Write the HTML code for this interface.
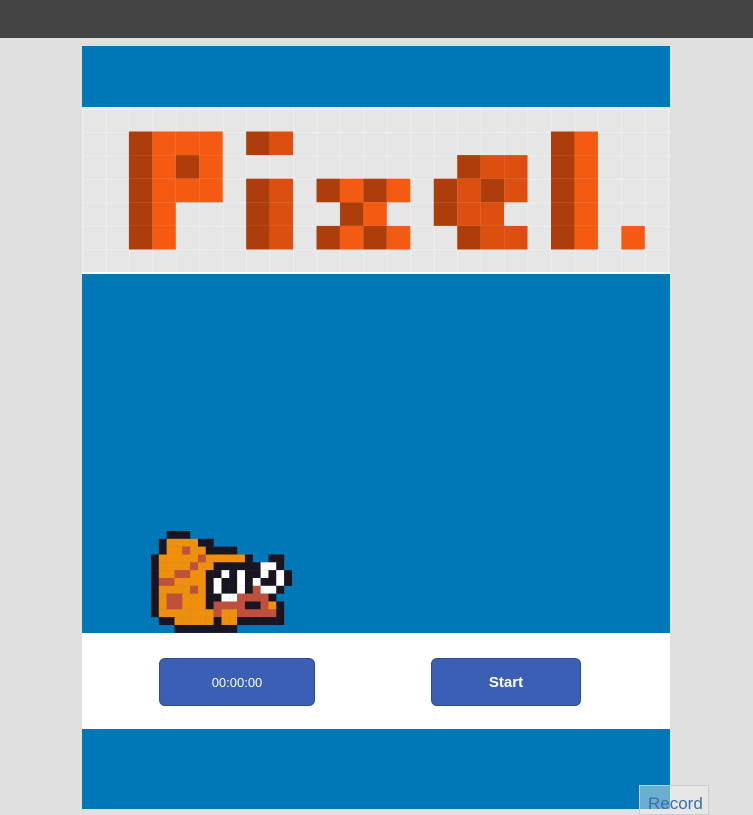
<!DOCTYPE html>
<html><head><style>
body{margin:0;width:753px;height:809px;background:#e0e0e0;position:relative;overflow:hidden;font-family:"Liberation Sans",sans-serif}
.a{position:absolute}
.btn{position:absolute;background:#3a5fb4;border:1px solid #2c4a99;border-radius:6px;color:#fff;display:flex;align-items:center;justify-content:center}
</style></head><body>
<div class="a" style="left:0;top:0;width:753px;height:38px;background:#444"></div>
<div class="a" style="left:82px;top:46px;width:588px;height:61px;background:#0078b8"></div>
<div class="a" style="left:82px;top:107px;width:588px;height:165px;background:#e6e6e6;
background-image:linear-gradient(90deg,#eeeeee 1px,transparent 1px),linear-gradient(#eeeeee 1px,transparent 1px);background-size:23.45px 23.4px;background-position:0 1.7px"></div>
<svg class="a" style="left:82px;top:107px" width="588" height="166" id="t"></svg>
<div class="a" style="left:82px;top:272px;width:588px;height:2px;background:#fff"></div>
<div class="a" style="left:82px;top:274px;width:588px;height:359px;background:#0078b8"></div>
<svg class="a" style="left:150.7px;top:531.3px" width="150" height="104" id="f"></svg>
<div class="a" style="left:82px;top:633px;width:588px;height:96px;background:#fff"></div>
<div class="btn" style="left:159px;top:658px;width:154px;height:46px;font-size:13px">00:00:00</div>
<div class="btn" style="left:431px;top:658px;width:148px;height:46px;font-size:15px;font-weight:bold">Start</div>
<div class="a" style="left:82px;top:729px;width:588px;height:80px;background:#0078b8"></div>
<div class="a" style="left:639px;top:785px;width:70px;height:30px;background:rgba(240,240,240,.45);border:1px solid #c8ccd4;color:#3a6ea8;font-size:17px;padding:8px 0 0 8px;box-sizing:border-box">Record</div>
<script>
var D='#ad3d0a',O='#f55a12',M='#dd4f10';
var cells=[[2,0,D],[3,0,O],[4,0,O],[5,0,O],[2,1,D],[3,1,O],[4,1,D],[5,1,O],[2,2,D],[3,2,O],[4,2,O],[5,2,O],[2,3,D],[3,3,O],[2,4,D],[3,4,O],
[7,0,D],[8,0,M],[7,2,D],[8,2,M],[7,3,D],[8,3,M],[7,4,D],[8,4,M],
[10,2,D],[11,2,O],[12,2,D],[13,2,O],[11,3,D],[12,3,O],[10,4,D],[11,4,O],[12,4,D],[13,4,O],
[16,1,D],[17,1,M],[18,1,M],[15,2,D],[16,2,M],[17,2,D],[18,2,M],[15,3,D],[16,3,M],[17,3,M],[16,4,D],[17,4,M],[18,4,M],
[20,0,D],[21,0,O],[20,1,D],[21,1,O],[20,2,D],[21,2,O],[20,3,D],[21,3,O],[20,4,D],[21,4,O],[23,4,O]];
var s='';cells.forEach(function(c){s+='<rect x="'+(c[0]*23.45)+'" y="'+(24.5+c[1]*23.6)+'" width="23.45" height="23.6" fill="'+c[2]+'"/>'});
document.getElementById('t').innerHTML=s;
var F=[
"..kkk..............",
".kooookk...........",
".koorookkkk........",
"koooooroooook..kk..",
"kooooroookkkkkkwwk..",
"koorrookkwkwkkwkwk.",
"krrooookwkkwkwkkwk.",
"kooooroKwkkwkrwwk..",
"korroookkwwrrrrk...",
"korroookrrrrkkrok..",
"kooooooorroorrrrrk..",
".kkoooookookkkkkk..",
"...kkkkkkkk........"];
F[4]="k"+"oooo"+"r"+"oo"+"kkkkkk"+"ww"+"k"+"..";
F[7]="k"+"oooo"+"r"+"o"+"k"+"w"+"kk"+"w"+"k"+"r"+"ww"+"k"+"..";
F[10]="k"+"ooooooo"+"r"+"oo"+"rrrrr"+"k"+"..";
var col={k:'#1a1420',o:'#f0900a',r:'#c0503c',w:'#ffffff'};
s='';F.forEach(function(r,y){for(var x=0;x<r.length;x++){var c=col[r[x]];if(c)s+='<rect x="'+(x*7.83)+'" y="'+(y*7.83)+'" width="7.9" height="7.9" fill="'+c+'"/>'}});
document.getElementById('f').innerHTML=s;
</script>
</body></html>
